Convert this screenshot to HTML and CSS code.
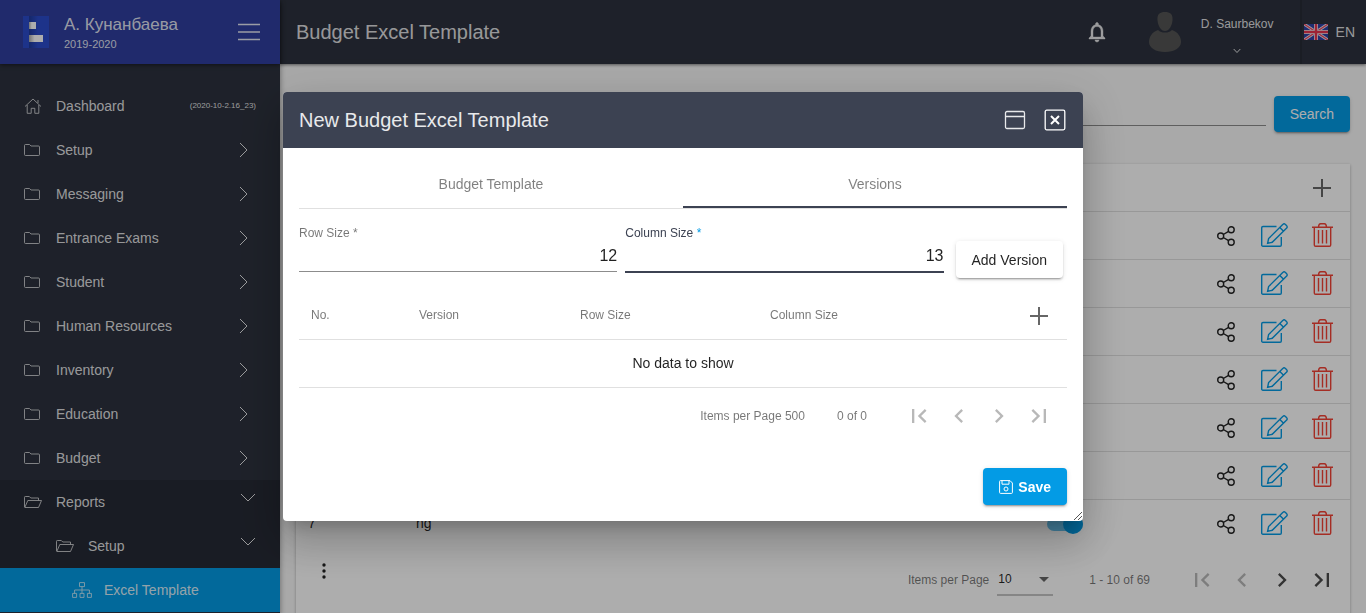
FILE: index.html
```html
<!DOCTYPE html>
<html lang="en">
<head>
<meta charset="utf-8">
<title>Budget Excel Template</title>
<link rel="stylesheet" href="styles.css">
</head>
<body>
<svg class="sprite" aria-hidden="true">
  <symbol id="folder" viewBox="0 0 18 16"><path d="M.5 3.500a1 1 0 0 1 1-1h4l1.500 1.500h7.500a1 1 0 0 1 1 1v7.500a1 1 0 0 1-1 1H1.500a1 1 0 0 1-1-1z"/></symbol>
  <symbol id="folder-open" viewBox="0 0 18 16"><path d="M.5 13V3.300a.8.8 0 0 1 .8-.8h4l1.500 1.500h7.700v2.500M.8 13.500l3-7h13.700l-3 7z"/></symbol>
  <symbol id="right" viewBox="0 0 16 16"><path d="M4 1l7 7-7 7"/></symbol>
  <symbol id="down" viewBox="0 0 16 16"><path d="M1 4l7 7 7-7"/></symbol>
  <symbol id="plus" viewBox="0 0 18 18"><path d="M9 0v18M0 9h18"/></symbol>
  <symbol id="share" viewBox="0 0 18 20"><circle cx="3.700" cy="10" r="3"/><circle cx="14.200" cy="3.800" r="3"/><circle cx="14.200" cy="16.200" r="3"/><path d="M6.300 8.500l5.300-3.200M6.300 11.500l5.300 3.200"/></symbol>
  <symbol id="edit" viewBox="0 0 27 24"><path d="M15.500 3.500H2a1.300 1.300 0 0 0-1.300 1.300v17A1.300 1.300 0 0 0 2 23.300h17a1.300 1.300 0 0 0 1.300-1.300v-8M6.600 20.300l1-4.800L22 1.300a1.500 1.500 0 0 1 2.200 0l1.500 1.500a1.500 1.500 0 0 1 0 2.200L11.200 19.300zM18.800 4.400l3.800 3.800"/></symbol>
  <symbol id="trash" viewBox="0 0 21 24"><path d="M0 4.200h21M6.500 4c.2-2.400.8-3.200 2-3.200h4c1.200 0 1.800.8 2 3.200M2.300 4.200V22a1.300 1.300 0 0 0 1.300 1.300h13.800a1.300 1.300 0 0 0 1.300-1.300V4.200M6.500 7v13.500M10.500 7v13.500M14.500 7v13.500"/></symbol>
  <symbol id="first" viewBox="0 0 24 24"><path d="M18.410 16.590L13.820 12l4.590-4.590L17 6l-6 6 6 6zM6 6h2v12H6z"/></symbol>
  <symbol id="prev" viewBox="0 0 24 24"><path d="M15.410 7.410L14 6l-6 6 6 6 1.410-1.410L10.830 12z"/></symbol>
  <symbol id="next" viewBox="0 0 24 24"><path d="M10 6L8.590 7.410 13.170 12l-4.580 4.590L10 18l6-6z"/></symbol>
  <symbol id="last" viewBox="0 0 24 24"><path d="M5.590 7.410L10.180 12l-4.590 4.590L7 18l6-6-6-6zM16 6h2v12h-2z"/></symbol>
</svg>

<div class="app">
  <aside class="sidebar">
    <div class="brand">
      <svg class="logo" viewBox="0 0 26 32" aria-hidden="true">
        <defs>
          <linearGradient id="lg"><stop offset="0" stop-color="#1e3a9c"/><stop offset="1" stop-color="#2c4ccc"/></linearGradient>
          <linearGradient id="lw"><stop offset="0" stop-color="#aaa"/><stop offset=".4" stop-color="#fff"/></linearGradient>
        </defs>
        <path fill="#2c4ccc" d="M0 0h26v32H0z"/><path fill="url(#lg)" d="M6 0h9v32H6z"/>
        <path fill="url(#lw)" d="M6 6h7v7H6z"/><path fill="url(#lw)" d="M6 19h14v7H6z"/>
      </svg>
      <div class="brand-text"><span class="school">А. Кунанбаева</span><span class="year">2019-2020</span></div>
      <button class="plain menu" aria-label="Toggle menu"><svg viewBox="0 0 22 18"><path d="M0 1.500h22M0 9h22M0 16.500h22"/></svg></button>
    </div>
    <nav class="nav">
      <a class="item" href="#"><svg class="nav-icon" viewBox="0 0 18 16"><path d="M1 8.500L9 1l8 7.500M3.200 7v8.300h4v-5h3.600v5h4V7M14 2v3"/></svg><span>Dashboard</span><small>(2020-10-2.16_23)</small></a>
      <a class="item" href="#"><svg class="nav-icon"><use href="#folder"/></svg><span>Setup</span><svg class="arrow"><use href="#right"/></svg></a>
      <a class="item" href="#"><svg class="nav-icon"><use href="#folder"/></svg><span>Messaging</span><svg class="arrow"><use href="#right"/></svg></a>
      <a class="item" href="#"><svg class="nav-icon"><use href="#folder"/></svg><span>Entrance Exams</span><svg class="arrow"><use href="#right"/></svg></a>
      <a class="item" href="#"><svg class="nav-icon"><use href="#folder"/></svg><span>Student</span><svg class="arrow"><use href="#right"/></svg></a>
      <a class="item" href="#"><svg class="nav-icon"><use href="#folder"/></svg><span>Human Resources</span><svg class="arrow"><use href="#right"/></svg></a>
      <a class="item" href="#"><svg class="nav-icon"><use href="#folder"/></svg><span>Inventory</span><svg class="arrow"><use href="#right"/></svg></a>
      <a class="item" href="#"><svg class="nav-icon"><use href="#folder"/></svg><span>Education</span><svg class="arrow"><use href="#right"/></svg></a>
      <a class="item" href="#"><svg class="nav-icon"><use href="#folder"/></svg><span>Budget</span><svg class="arrow"><use href="#right"/></svg></a>
      <div class="group">
        <a class="item" href="#"><svg class="nav-icon"><use href="#folder-open"/></svg><span>Reports</span><svg class="arrow open"><use href="#down"/></svg></a>
        <a class="item level-2" href="#"><svg class="nav-icon"><use href="#folder-open"/></svg><span>Setup</span><svg class="arrow open"><use href="#down"/></svg></a>
        <a class="item level-3 active" href="#"><svg class="nav-icon" viewBox="0 0 20 16"><path d="M7.500.6h5v4h-5zM.6 11.400h4v4h-4zM8 11.400h4v4H8zM15.400 11.400h4v4h-4zM10 4.600v6.800M2.600 11.400V8h14.800v3.400"/></svg><span>Excel Template</span></a>
      </div>
    </nav>
  </aside>

  <div class="page">
    <header class="topbar">
      <h1>Budget Excel Template</h1>
      <button class="plain bell" aria-label="Notifications"><svg viewBox="0 0 24 24"><path d="M12 22c1.100 0 2-.9 2-2h-4c0 1.100.9 2 2 2zm6-6v-5c0-3.070-1.630-5.640-4.500-6.320V4c0-.83-.67-1.500-1.500-1.500s-1.500.67-1.500 1.500v.68C7.640 5.360 6 7.920 6 11v5l-2 2v1h16v-1l-2-2zm-2 1H8v-6c0-2.480 1.510-4.500 4-4.500s4 2.020 4 4.500v6z"/></svg></button>
      <svg class="avatar" viewBox="0 0 32 40" aria-hidden="true"><path d="M16 0c5 0 8 2 7.500 8-.4 6-3.500 11-7.500 11S8.900 14 8.500 8C8 2 11 0 16 0z"/><path d="M9 18c2 2 4 2.500 7 2.500S21 20 23 18c6 2 9 7 9 12 0 6-7 10-16 10S0 36 0 30c0-5 3-10 9-12z"/></svg>
      <button class="plain user"><span>D. Saurbekov</span><svg viewBox="0 0 8 6"><path d="M.7 1L4 4.500 7.300 1"/></svg></button>
      <button class="plain lang">
        <svg viewBox="0 0 24 16" aria-hidden="true"><path fill="#2e42a5" stroke="none" d="M0 0h24v16H0z"/><path stroke="#e8e8f0" stroke-width="3" d="M0 0l24 16M24 0L0 16"/><path stroke="#f0405a" stroke-width="1.200" d="M0 0l24 16M24 0L0 16"/><path stroke="#e8e8f0" stroke-width="4" d="M12 0v16M0 8h24"/><path stroke="#e8344e" stroke-width="2.400" d="M12 0v16M0 8h24"/></svg>
        <span>EN</span>
      </button>
    </header>

    <main class="content">
      <form class="search">
        <input type="text" aria-label="Search">
        <button class="btn primary" type="button">Search</button>
      </form>
      <section class="card">
        <table class="grid templates">
          <colgroup><col class="c-no"><col><col class="c-toggle"><col class="c-action"><col class="c-action"><col class="c-action"><col class="c-end"></colgroup>
          <thead><tr><th></th><th></th><th></th><th></th><th></th><th class="action"><button class="plain" aria-label="Add"><svg class="plus"><use href="#plus"/></svg></button></th><th></th></tr></thead>
          <tbody>
            <tr><td></td><td></td><td></td><td class="action"><button class="plain" aria-label="Share"><svg class="share"><use href="#share"/></svg></button></td><td class="action"><button class="plain" aria-label="Edit"><svg class="edit"><use href="#edit"/></svg></button></td><td class="action"><button class="plain" aria-label="Delete"><svg class="trash"><use href="#trash"/></svg></button></td><td></td></tr>
            <tr><td></td><td></td><td></td><td class="action"><button class="plain" aria-label="Share"><svg class="share"><use href="#share"/></svg></button></td><td class="action"><button class="plain" aria-label="Edit"><svg class="edit"><use href="#edit"/></svg></button></td><td class="action"><button class="plain" aria-label="Delete"><svg class="trash"><use href="#trash"/></svg></button></td><td></td></tr>
            <tr><td></td><td></td><td></td><td class="action"><button class="plain" aria-label="Share"><svg class="share"><use href="#share"/></svg></button></td><td class="action"><button class="plain" aria-label="Edit"><svg class="edit"><use href="#edit"/></svg></button></td><td class="action"><button class="plain" aria-label="Delete"><svg class="trash"><use href="#trash"/></svg></button></td><td></td></tr>
            <tr><td></td><td></td><td></td><td class="action"><button class="plain" aria-label="Share"><svg class="share"><use href="#share"/></svg></button></td><td class="action"><button class="plain" aria-label="Edit"><svg class="edit"><use href="#edit"/></svg></button></td><td class="action"><button class="plain" aria-label="Delete"><svg class="trash"><use href="#trash"/></svg></button></td><td></td></tr>
            <tr><td></td><td></td><td></td><td class="action"><button class="plain" aria-label="Share"><svg class="share"><use href="#share"/></svg></button></td><td class="action"><button class="plain" aria-label="Edit"><svg class="edit"><use href="#edit"/></svg></button></td><td class="action"><button class="plain" aria-label="Delete"><svg class="trash"><use href="#trash"/></svg></button></td><td></td></tr>
            <tr><td></td><td></td><td></td><td class="action"><button class="plain" aria-label="Share"><svg class="share"><use href="#share"/></svg></button></td><td class="action"><button class="plain" aria-label="Edit"><svg class="edit"><use href="#edit"/></svg></button></td><td class="action"><button class="plain" aria-label="Delete"><svg class="trash"><use href="#trash"/></svg></button></td><td></td></tr>
            <tr><td>7</td><td>ng</td><td class="toggle-cell"><input class="toggle" type="checkbox" checked aria-label="Active"></td><td class="action"><button class="plain" aria-label="Share"><svg class="share"><use href="#share"/></svg></button></td><td class="action"><button class="plain" aria-label="Edit"><svg class="edit"><use href="#edit"/></svg></button></td><td class="action"><button class="plain" aria-label="Delete"><svg class="trash"><use href="#trash"/></svg></button></td><td></td></tr>
          </tbody>
        </table>
        <footer class="card-foot">
          <button class="plain more" aria-label="More"><svg viewBox="0 0 4 16"><circle cx="2" cy="2" r="1.700"/><circle cx="2" cy="8" r="1.700"/><circle cx="2" cy="14" r="1.700"/></svg></button>
          <div class="pager">
            <label for="size">Items per Page</label>
            <span class="select"><select id="size"><option>10</option></select></span>
            <span class="range">1 - 10 of 69</span>
            <button class="plain" disabled aria-label="First page"><svg><use href="#first"/></svg></button>
            <button class="plain" disabled aria-label="Previous page"><svg><use href="#prev"/></svg></button>
            <button class="plain" aria-label="Next page"><svg><use href="#next"/></svg></button>
            <button class="plain" aria-label="Last page"><svg><use href="#last"/></svg></button>
          </div>
        </footer>
      </section>
    </main>
  </div>
</div>

<div class="backdrop">
  <section class="dialog" role="dialog" aria-labelledby="dialog-title">
    <header class="dialog-head">
      <h2 id="dialog-title">New Budget Excel Template</h2>
      <button class="plain" aria-label="Maximize"><svg viewBox="0 0 22 22"><rect x="1.500" y="2.500" width="19" height="17" rx="1.500"/><path d="M1.500 7.500h19"/></svg></button>
      <button class="plain close" aria-label="Close"><svg viewBox="0 0 22 22"><rect x="1.200" y="1.200" width="19.600" height="19.600" rx="1.500"/><path d="M7 7l8 8M15 7l-8 8" stroke-width="2"/></svg></button>
    </header>
    <div class="dialog-body">
      <div class="tabs" role="tablist">
        <button class="plain tab" role="tab">Budget Template</button>
        <button class="plain tab selected" role="tab" aria-selected="true">Versions</button>
      </div>
      <form class="sizes">
        <div class="field"><label for="rows">Row Size *</label><input id="rows" type="text" inputmode="numeric" value="12"></div>
        <div class="field focused"><label for="cols">Column Size <span>*</span></label><input id="cols" type="text" inputmode="numeric" value="13"></div>
        <button class="btn" type="button">Add Version</button>
      </form>
      <table class="grid versions">
        <colgroup><col class="c-no"><col class="c-version"><col class="c-rows"><col><col class="c-add"></colgroup>
        <thead><tr><th>No.</th><th>Version</th><th>Row Size</th><th>Column Size</th><th class="action"><button class="plain" aria-label="Add"><svg class="plus"><use href="#plus"/></svg></button></th></tr></thead>
        <tbody><tr><td class="empty" colspan="5">No data to show</td></tr></tbody>
      </table>
      <div class="pager">
        <span>Items per Page 500</span>
        <span class="range">0 of 0</span>
        <button class="plain" disabled aria-label="First page"><svg><use href="#first"/></svg></button>
        <button class="plain" disabled aria-label="Previous page"><svg><use href="#prev"/></svg></button>
        <button class="plain" disabled aria-label="Next page"><svg><use href="#next"/></svg></button>
        <button class="plain" disabled aria-label="Last page"><svg><use href="#last"/></svg></button>
      </div>
      <div class="actions">
        <button class="btn primary save"><svg viewBox="0 0 14 14"><path d="M1.500.6h9.500l2.400 2.400v9.500a.9.9 0 0 1-.9.9h-11a.9.9 0 0 1-.9-.9v-11a.9.9 0 0 1 .9-.9zM3 .6v3.600h7V.6"/><circle cx="7" cy="9" r="2"/></svg><span>Save</span></button>
      </div>
    </div>
    <svg class="grip" viewBox="0 0 10 10" aria-hidden="true"><path d="M1 9L9 1M5 9l4-4"/></svg>
  </section>
</div>
</body>
</html>
```
FILE: styles.css
```css
* { box-sizing: border-box; }
body {
  margin: 0;
  height: 100vh;
  overflow: hidden;
  background: #fafafa;
  color: rgba(0, 0, 0, .87);
  font: 14px/20px "Liberation Sans", Arial, sans-serif;
}
svg { display: block; fill: none; stroke: currentColor; }
.sprite { position: absolute; width: 0; height: 0; }
.plain {
  display: flex;
  align-items: center;
  justify-content: center;
  padding: 0;
  border: 0;
  background: none;
  color: inherit;
  font: inherit;
}
.app { display: flex; height: 100vh; }

/* Sidebar */
.sidebar {
  flex: none;
  width: 280px;
  background: #2d323e;
  color: rgba(255, 255, 255, .87);
  box-shadow: 0 3px 6px rgba(0, 0, 0, .4);
  z-index: 2;
}
.brand {
  display: flex;
  align-items: center;
  height: 64px;
  padding: 0 20px 0 23px;
  background: #303f9f;
  box-shadow: 0 1px 4px rgba(0, 0, 0, .5);
}
.logo { width: 26px; height: 32px; stroke: none; }
.brand-text { display: flex; flex: 1; flex-direction: column; margin-left: 15px; padding-top: 4px; }
.school { font-size: 17px; line-height: 20px; }
.year { font-size: 11px; line-height: 18px; }
.menu svg { width: 22px; height: 18px; stroke-width: 1.5; }
.nav { padding-top: 20px; }
.item {
  display: flex;
  align-items: center;
  height: 44px;
  padding: 0 24px;
  color: inherit;
  text-decoration: none;
}
.item span { flex: 1; }
.item small { font-size: 8px; }
.nav-icon { width: 18px; height: 16px; margin-right: 14px; opacity: .8; }
.arrow { width: 16px; height: 16px; margin-right: 4px; }
.arrow.open { margin: 0 0 8px; }
.group { background: rgba(0, 0, 0, .14); }
.level-2 { padding-left: 56px; }
.level-3 { padding-left: 72px; }
.level-3 .nav-icon { width: 20px; margin-right: 12px; }
.active { background: #039be5; }

/* Top bar */
.page { display: flex; flex: 1; flex-direction: column; min-width: 0; }
.topbar {
  display: flex;
  flex: none;
  align-items: center;
  height: 64px;
  padding-left: 16px;
  background: #2d323e;
  color: rgba(255, 255, 255, .87);
  box-shadow: 0 1px 3px rgba(0, 0, 0, .5);
}
.topbar h1 { flex: 1; margin: 0; font-size: 20px; line-height: 24px; font-weight: normal; }
.bell svg { width: 24px; height: 24px; fill: currentColor; stroke-width: .4; }
.avatar { width: 32px; height: 40px; margin: 0 20px 0 40px; fill: #555; stroke: none; }
.user { flex-direction: column; gap: 16px; margin-right: 26px; padding-top: 6px; font-size: 12px; line-height: 16px; }
.user svg { width: 8px; height: 6px; }
.lang { align-self: stretch; gap: 8px; padding: 0 11px 0 2px; border-left: 2px solid #272b35; }
.lang svg { width: 24px; height: 16px; }

/* Content */
.content { flex: 1; min-height: 0; padding: 32px 16px 0; }
.search { display: flex; gap: 8px; margin-bottom: 32px; }
.search input {
  flex: 1;
  height: 30px;
  padding: 0;
  border: 0;
  border-bottom: 1px solid #8c8c8c;
  background: none;
  font: inherit;
}
.btn {
  display: flex;
  align-items: center;
  justify-content: center;
  height: 36px;
  padding: 0 16px;
  border: 0;
  border-radius: 4px;
  background: #fff;
  color: rgba(0, 0, 0, .87);
  font: inherit;
  box-shadow: 0 3px 1px -2px rgba(0, 0, 0, .2), 0 2px 2px rgba(0, 0, 0, .14), 0 1px 5px rgba(0, 0, 0, .12);
}
.primary { background: #039be5; color: #fff; }
.card { background: #fff; box-shadow: 0 1px 3px rgba(0, 0, 0, .3); }
.grid { width: 100%; border-collapse: separate; border-spacing: 0; table-layout: fixed; }
.grid th, .grid td {
  height: 48px;
  padding: 0 12px 2px;
  border-bottom: 1px solid #e0e0e0;
  text-align: left;
}
.grid th { color: rgba(0, 0, 0, .54); font-size: 12px; font-weight: normal; }
.grid .action { padding: 0; }
.action .plain { width: 100%; height: 47px; }
.templates .edit, .templates .trash { margin-bottom: 1px; }
.templates tr:last-child td { border-bottom-color: transparent; }
.c-no { width: 108px; }
.c-toggle { width: 155px; }
.c-action { width: 48px; }
.c-end { width: 4px; }
.c-version { width: 161px; }
.c-rows { width: 190px; }
.c-add { width: 56px; }
.plus { width: 18px; height: 18px; stroke-width: 2; color: rgba(0, 0, 0, .6); }
.share { width: 18px; height: 20px; stroke-width: 1.4; color: #222; }
.edit { width: 27px; height: 24px; stroke-width: 1.4; color: #039be5; }
.trash { width: 21px; height: 24px; stroke-width: 1.4; color: #f44336; }
.grid .toggle-cell { padding: 0; }
.toggle {
  display: flex;
  align-items: center;
  justify-content: flex-end;
  width: 36px;
  height: 14px;
  margin: 0;
  border-radius: 7px;
  appearance: none;
  background: #68c3ef;
}
.toggle::before { content: ""; width: 20px; height: 20px; border-radius: 50%; background: #039be5; flex: none; }
.card-foot {
  display: flex;
  align-items: center;
  justify-content: space-between;
  height: 72px;
  padding: 0 8px 8px 16px;
}
.more { width: 24px; height: 40px; margin-bottom: 18px; }
.more svg { width: 4px; height: 16px; fill: currentColor; stroke: none; }
.pager {
  display: flex;
  align-items: center;
  justify-content: flex-end;
  color: rgba(0, 0, 0, .54);
  font-size: 12px;
}
.pager .plain { width: 40px; height: 40px; color: rgba(0, 0, 0, .7); }
.pager .plain:disabled { color: rgba(0, 0, 0, .28); }
.pager svg { width: 28px; height: 28px; fill: currentColor; stroke: none; }
.range { margin: 0 32px; }
.select {
  display: flex;
  align-items: center;
  width: 56px;
  height: 32px;
  margin: 0 4px 0 8px;
  border-bottom: 2px solid #c4c4c4;
}
.select::after { content: ""; margin-right: 4px; border: 5px solid transparent; border-top-color: #666; border-bottom: 0; }
.select select {
  flex: 1;
  padding: 0 1px;
  border: 0;
  appearance: none;
  background: none;
  color: rgba(0, 0, 0, .87);
  font: inherit;
}

/* Dialog */
.backdrop {
  position: fixed;
  inset: 0;
  z-index: 10;
  display: flex;
  align-items: center;
  justify-content: center;
  background: rgba(0, 0, 0, .32);
}
.dialog {
  position: relative;
  width: 800px;
  max-width: 100%;
  overflow: hidden;
  border-radius: 4px;
  background: #fff;
  box-shadow: 0 11px 15px -7px rgba(0, 0, 0, .2), 0 24px 38px 3px rgba(0, 0, 0, .14), 0 9px 46px 8px rgba(0, 0, 0, .12);
}
.dialog-head {
  display: flex;
  align-items: center;
  gap: 18px;
  height: 56px;
  padding: 0 17px 0 16px;
  background: #3c4252;
  color: #e8e9eb;
}
.dialog-head h2 { flex: 1; margin: 0; font-size: 20px; line-height: 24px; font-weight: normal; }
.dialog-head svg { width: 22px; height: 22px; stroke-width: 1.3; }
.dialog-head .close { color: #fff; }
.dialog-body { padding: 12px 16px 16px; }
.tabs { display: flex; border-bottom: 1px solid #e0e0e0; }
.tab { flex: 1; height: 48px; padding-top: 2px; color: rgba(0, 0, 0, .5); border-bottom: 2px solid transparent; }
.tab.selected { border-bottom-color: #3c4252; }
.sizes { display: flex; align-items: flex-start; gap: 8px; padding: 16px 0 14px; }
.sizes .btn { height: 37px; margin: 16px 4px 0; }
.field { display: flex; flex: 1; flex-direction: column; min-width: 0; }
.field label { color: rgba(0, 0, 0, .54); font-size: 12px; line-height: 16px; }
.field input {
  width: 100%;
  height: 31px;
  padding: 0;
  border: 0;
  border-bottom: 1px solid #8c8c8c;
  background: none;
  color: rgba(0, 0, 0, .87);
  font: inherit;
  font-size: 16px;
  text-align: right;
}
.focused label { color: #3c4252; }
.focused label span { color: #039be5; }
.focused input { height: 32px; border-bottom: 2px solid #3c4252; }
.grid .empty { text-align: center; }
.dialog .pager { height: 56px; padding-right: 8px; }
.actions { display: flex; justify-content: flex-end; margin-top: 24px; }
.save { gap: 5px; height: 37px; font-weight: bold; }
.save svg { width: 14px; height: 14px; }
.grip { position: absolute; right: 0; bottom: 0; width: 10px; height: 10px; color: #555; }
```
